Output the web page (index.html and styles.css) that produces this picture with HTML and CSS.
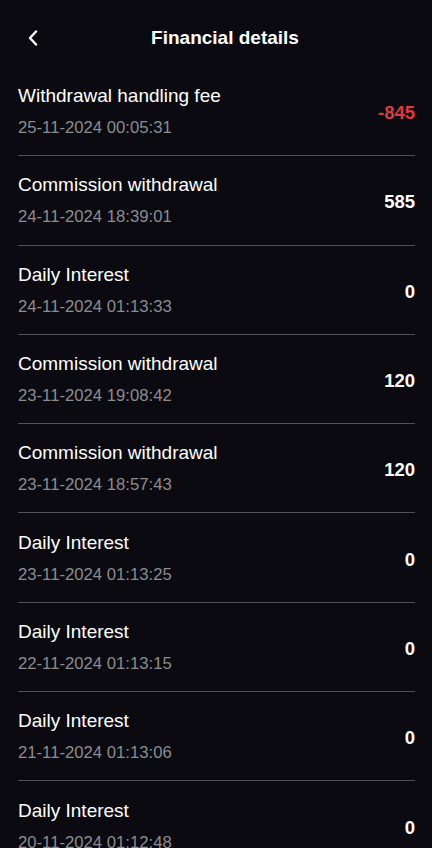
FILE: index.html
```html
<!DOCTYPE html>
<html>
<head>
<meta charset="utf-8">
<link rel="stylesheet" href="styles.css">
</head>
<body>
<div class="page">
  <header class="topbar">
    <button class="back" aria-label="Back">
      <svg width="10" height="16" viewBox="0 0 10 16"><path d="M8 1.5 L2 8 L8 14.5" fill="none" stroke="#fff" stroke-width="2.4" stroke-linecap="round" stroke-linejoin="round"/></svg>
    </button>
    <h1 class="title">Financial details</h1>
  </header>
  <ul class="list">
    <li class="row"><div class="info"><div class="name">Withdrawal handling fee</div><div class="date">25-11-2024 00:05:31</div></div><div class="amount neg">-845</div></li>
    <li class="row"><div class="info"><div class="name">Commission withdrawal</div><div class="date">24-11-2024 18:39:01</div></div><div class="amount">585</div></li>
    <li class="row"><div class="info"><div class="name">Daily Interest</div><div class="date">24-11-2024 01:13:33</div></div><div class="amount">0</div></li>
    <li class="row"><div class="info"><div class="name">Commission withdrawal</div><div class="date">23-11-2024 19:08:42</div></div><div class="amount">120</div></li>
    <li class="row"><div class="info"><div class="name">Commission withdrawal</div><div class="date">23-11-2024 18:57:43</div></div><div class="amount">120</div></li>
    <li class="row"><div class="info"><div class="name">Daily Interest</div><div class="date">23-11-2024 01:13:25</div></div><div class="amount">0</div></li>
    <li class="row"><div class="info"><div class="name">Daily Interest</div><div class="date">22-11-2024 01:13:15</div></div><div class="amount">0</div></li>
    <li class="row"><div class="info"><div class="name">Daily Interest</div><div class="date">21-11-2024 01:13:06</div></div><div class="amount">0</div></li>
    <li class="row"><div class="info"><div class="name">Daily Interest</div><div class="date">20-11-2024 01:12:48</div></div><div class="amount">0</div></li>
  </ul>
</div>
</body>
</html>
```
FILE: styles.css
```css
* { box-sizing: border-box; }
html, body { margin: 0; padding: 0; background: #0a0a10; }
body {
  font-family: "Liberation Sans", Arial, sans-serif;
  color: #fff;
  height: 848px;
  overflow: hidden;
}
.page { width: 432px; }
.topbar {
  position: relative;
  height: 67px;
  padding: 26px 18px 17px 36px;
  display: flex;
  justify-content: center;
}
.back {
  position: absolute;
  left: 23px;
  top: 26px;
  width: 20px;
  height: 24px;
  padding: 0;
  border: 0;
  background: none;
  display: flex;
  align-items: center;
  justify-content: center;
}
.title {
  margin: 0;
  font-size: 19px;
  line-height: 24px;
  font-weight: 700;
}
.list {
  list-style: none;
  margin: 0;
  padding: 0 17px 0 18px;
}
.row {
  display: flex;
  align-items: center;
  justify-content: space-between;
  height: 89.3px;
  padding: 17px 0 17px;
  border-bottom: 1px solid #505056;
}
.name {
  font-size: 19px;
  line-height: 24px;
}
.date {
  margin-top: 10px;
  font-size: 16.7px;
  line-height: 20px;
  color: #8c8c91;
}
.amount {
  font-size: 18.5px;
  font-weight: 700;
  line-height: 24px;
  padding-top: 4px;
}
.amount.neg { color: #dd3b3f; }
```
